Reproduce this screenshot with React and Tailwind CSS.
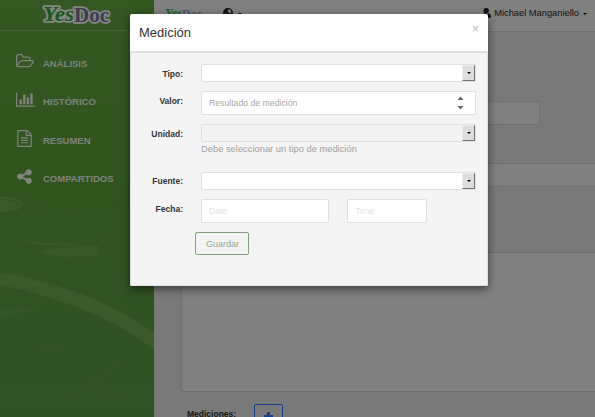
import React from "react";

const FOLDER =
  "M1781 803q0-35-53-35h-1088q-40 0-85.5 21.5t-71.5 52.5l-294 363q-18 24-18 40 0 35 53 35h1088q40 0 86-22t71-53l294-363q18-22 18-39zm-1141-163h768v-160q0-40-28-68t-68-28h-576q-40 0-68-28t-28-68v-64q0-40-28-68t-68-28h-320q-40 0-68 28t-28 68v853l256-315q44-53 116-87.5t140-34.5zm1269 163q0 62-46 120l-295 363q-43 53-116 87.5t-140 34.5h-1088q-92 0-158-66t-66-158v-960q0-92 66-158t158-66h320q92 0 158 66t66 158v32h544q92 0 158 66t66 158v160h192q54 0 99 24.5t67 70.5q15 32 15 68z";
const CHART =
  "M640 896v512h-256v-512h256zm384-512v1024h-256v-1024h256zm1024 1152v128h-2048v-1536h128v1408h1920zm-640-896v768h-256v-768h256zm384-384v1152h-256v-1152h256z";
const FILE =
  "M1596 380q28 28 48 76t20 88v1152q0 40-28 68t-68 28h-1344q-40 0-68-28t-28-68v-1600q0-40 28-68t68-28h896q40 0 88 20t76 48zm-444-244v376h376q-10-29-22-41l-313-313q-12-12-41-22zm384 1528v-1024h-416q-40 0-68-28t-28-68v-416h-768v1536h1280zm-1024-864q0-14 9-23t23-9h704q14 0 23 9t9 23v64q0 14-9 23t-23 9h-704q-14 0-23-9t-9-23v-64zm736 224q14 0 23 9t9 23v64q0 14-9 23t-23 9h-704q-14 0-23-9t-9-23v-64q0-14 9-23t23-9h704zm0 256q14 0 23 9t9 23v64q0 14-9 23t-23 9h-704q-14 0-23-9t-9-23v-64q0-14 9-23t23-9h704z";
const SHARE =
  "M1344 1024q133 0 226.5 93.5t93.5 226.5-93.5 226.5-226.5 93.5-226.5-93.5-93.5-226.5q0-12 2-34l-360-180q-92 86-218 86-133 0-226.5-93.5t-93.5-226.5 93.5-226.5 226.5-93.5q126 0 218 86l360-180q-2-22-2-34 0-133 93.5-226.5t226.5-93.5 226.5 93.5 93.5 226.5-93.5 226.5-226.5 93.5q-126 0-218-86l-360 180q2 22 2 34t-2 34l360 180q92-86 218-86z";

const NAV = [
  { label: "ANÁLISIS", d: FOLDER, box: "0 0 1920 1792", size: "w-[18px] h-[17px]", row: "h-[38px]", pad: "pt-[2px]" },
  { label: "HISTÓRICO", d: CHART, box: "0 0 2048 1792", size: "w-[19px] h-[17px]", row: "h-[38px]", pad: "" },
  { label: "RESUMEN", d: FILE, box: "0 0 1792 1792", size: "w-[17px] h-[17px]", row: "h-[40px]", pad: "" },
  { label: "COMPARTIDOS", d: SHARE, box: "0 0 1792 1792", size: "w-[17px] h-[17px]", row: "h-[37px]", pad: "" },
];

function Logo() {
  return (
    <svg
      className="w-[72px] h-[28px]"
      viewBox="0 0 72 28"
      fontFamily="'Liberation Serif','Times New Roman',serif"
      fontWeight="bold"
      strokeLinejoin="round"
      stroke="#858585"
      strokeWidth="3.6"
      paintOrder="stroke"
    >
      <text x="1" y="18.5" fontSize="21" fontStyle="italic" textLength="31" lengthAdjust="spacingAndGlyphs" fill="#17581b">Yes</text>
      <text x="32" y="20" fontSize="21" textLength="35" lengthAdjust="spacingAndGlyphs" fill="#3c3c52">Doc</text>
    </svg>
  );
}

function Brush() {
  return (
    <svg className="absolute inset-0 w-[154px] h-[417px]" viewBox="0 0 154 417" fill="none">
      <path d="M0 272C45 281 105 296 154 333V349C112 317 55 296 0 285Z" fill="#3a5a29" />
      <path d="M0 276C50 286 105 304 154 339" stroke="#40602f" strokeWidth="1" opacity=".6" />
      <path d="M50 292C90 304 125 322 152 348" stroke="#3c5c2b" strokeWidth="1" />
      <path d="M20 241L55 243 75 244 74 246 40 245Z" fill="#395a28" />
      <path d="M75 246L98 245V256L67 257 38 254Q42 250 50 249Z" fill="#385927" />
      <path d="M0 197C15 197 24 200 23 205C21 210 8 212 0 212Z" fill="#3a5b28" />
      <path d="M0 200C12 199 21 202 18 207" stroke="#335421" />
      <path d="M0 312Q14 307 26 307L35 310Q15 314 0 317Z" fill="#355626" />
      <path d="M25 197Q42 203 33 209M30 215Q80 208 130 212M30 270H75M98 240L106 238" stroke="#375724" strokeWidth="1" opacity=".5" />
      <path d="M72 395Q100 380 115 364M45 345Q52 349 60 344M100 390Q116 397 124 393" stroke="#375626" strokeWidth="1" opacity=".5" />
    </svg>
  );
}

function Sidebar() {
  return (
    <aside className="relative w-[154px] h-full shrink-0 bg-gradient-to-b from-[#355721] via-[#31541f] to-[#315225]">
      <Brush />
      <div className="relative flex h-[31px] border-b border-[#48653a] pl-[42px] pt-[2px]">
        <Logo />
      </div>
      <nav className="relative pt-[11px] pl-4">
        {NAV.map((n) => (
          <a key={n.label} className={`flex items-center ${n.row}`}>
            <span className={`w-[27px] shrink-0 ${n.pad}`}>
              <svg viewBox={n.box} className={`${n.size} fill-[#7f837c]`}>
                <path d={n.d} />
              </svg>
            </span>
            <span className="pt-[5px] text-[9.5px] leading-none font-bold text-[#7f837c]">{n.label}</span>
          </a>
        ))}
      </nav>
    </aside>
  );
}

function Page() {
  return (
    <main className="flex-1 min-w-0 h-full overflow-hidden bg-[#797979]">
      <header className="flex h-8 items-start border-b border-[#707070] bg-[#808080] pl-[11px] pr-[8px] pt-[7px]">
        <svg className="w-[38px] h-[14px]" viewBox="0 0 38 14" fontFamily="'Liberation Serif','Times New Roman',serif" fontWeight="bold">
          <text x="0" y="10" fontSize="12" fontStyle="italic" textLength="17" lengthAdjust="spacingAndGlyphs" fill="#14602c">Yes</text>
          <text x="17" y="11" fontSize="12" textLength="20" lengthAdjust="spacingAndGlyphs" fill="#51516a">Doc</text>
        </svg>
        <svg className="ml-5 mt-px w-[10px] h-[10px]" viewBox="0 0 10 10">
          <circle cx="5" cy="5" r="4.9" fill="#111" />
          <path d="M5.6 1L8 2.2 8.3 4.4 6.8 5.4 5.4 4 4.4 3.4ZM2 5L4 6 3.4 8Z" fill="#808080" />
        </svg>
        <span className="ml-[5px] mt-[6px] border-x-2 border-t-2 border-x-transparent border-t-black" />
        <div className="ml-auto flex items-center pt-px text-[9.3px] leading-[10px] text-[#111]">
          <svg className="mr-[3px] w-[9px] h-[10px]" viewBox="0 0 9 10" fill="#111">
            <circle cx="4.2" cy="2.8" r="2.7" />
            <path d="M0 8.5Q0 5.5 3 5.2Q5 6.5 7 5.2Q9 6 9 9.8H1Q0 9.8 0 8.5Z" />
          </svg>
          Michael Manganiello
          <span className="ml-1 mt-[2px] border-x-2 border-t-2 border-x-transparent border-t-black" />
        </div>
      </header>
      <div className="pl-[27px] pt-[69px]">
        <div className="h-6 w-[359px] rounded-[2px] border border-[#707070] bg-[#808080]" />
        <div className="mt-[38px] h-6 w-[440px] rounded-[2px] border border-[#707070] bg-[#808080]" />
        <div className="mt-[65px] h-[140px] w-[440px] rounded-[2px] border border-[#6e6e6e] bg-[#808080]" />
        <div className="mt-3 flex pl-[6px]">
          <span className="w-[67px] pt-[5px] text-[8.5px] leading-[10px] font-bold text-[#171717]">Mediciones:</span>
          <span className="flex h-6 w-[29px] justify-center rounded-[2px] border border-[#173f8c] pt-[7px]">
            <svg className="w-[9px] h-[9px]" viewBox="0 0 9 9" fill="#173f8c">
              <path d="M3 0H6V3H9V6H6V9H3V6H0V3H3Z" />
            </svg>
          </span>
        </div>
      </div>
    </main>
  );
}

function Select({ disabled }) {
  return (
    <div className={`flex h-[18px] w-[275px] justify-end rounded-[2px] border border-[#e0e0e0] ${disabled ? "bg-[#f3f3f3]" : "bg-white"}`}>
      <span className="flex h-4 w-[13px] items-center justify-center border-t border-l border-r border-b border-t-[#eee] border-l-[#eee] border-r-[#737373] border-b-[#737373] bg-[#dcdcdc]">
        <span className="border-x-2 border-t-2 border-x-transparent border-t-black" />
      </span>
    </div>
  );
}

function Row({ label, className, labelPad, children }) {
  return (
    <div className={`flex items-start ${className}`}>
      <label className={`w-[52px] shrink-0 text-right text-[8.5px] leading-[10px] font-bold text-[#333] ${labelPad}`}>{label}</label>
      <div className="ml-[18px] flex">{children}</div>
    </div>
  );
}

function Modal() {
  return (
    <section className="absolute left-[130px] top-[14px] flex h-[272px] w-[358px] flex-col rounded-[2px] bg-white shadow-[0_3px_10px_rgba(0,0,0,0.5)]">
      <header className="flex h-[37px] shrink-0 items-start justify-between pl-[9px] pr-[9px]">
        <h4 className="pt-[11px] text-[13px] leading-[15px] text-[#333]">Medición</h4>
        <button className="pt-[10px] text-[12px] leading-[10px] text-[#bbb]">×</button>
      </header>
      <div className="flex-1 rounded-[2px] border border-t-2 border-[#e0e0e0] bg-[#f4f4f4] pt-[11px]">
        <Row label="Tipo:" className="h-[27px]" labelPad="pt-[5px]"><Select /></Row>
        <Row label="Valor:" className="h-[33px]" labelPad="pt-[5px]">
          <div className="flex h-6 w-[275px] items-center justify-between rounded-[2px] border border-[#e0e0e0] bg-white pl-[7px] pr-[11px]">
            <span className="text-[8.7px] leading-[10px] text-[#aaa]">Resultado de medición</span>
            <svg className="w-[7px] h-[14px]" viewBox="0 0 7 14" fill="#666">
              <path d="M.5 4L3.5 .5 6.5 4ZM.5 10L3.5 13.5 6.5 10Z" />
            </svg>
          </div>
        </Row>
        <Row label="Unidad:" className="h-[18px]" labelPad="pt-[5px]"><Select disabled /></Row>
        <p className="h-[30px] pl-[70px] pt-[2px] text-[9.35px] leading-[10px] text-[#a0a0a0]">Debe seleccionar un tipo de medición</p>
        <Row label="Fuente:" className="h-[27px]" labelPad="pt-[4px]"><Select /></Row>
        <Row label="Fecha:" className="h-[33px]" labelPad="pt-[5px]">
          <div className="flex h-6 w-[128px] items-center rounded-[2px] border border-[#e0e0e0] bg-white pl-[7px] text-[8.7px] leading-[10px] text-[#e2e2e2]">Date</div>
          <div className="ml-[18px] flex h-6 w-[80px] items-center rounded-[2px] border border-[#e0e0e0] bg-white pl-[7px] text-[8.7px] leading-[10px] text-[#e2e2e2]">Time</div>
        </Row>
        <button className="ml-16 flex h-[23px] w-[54px] items-center justify-center rounded-[2px] border border-[#84a07e] pl-px text-[9px] leading-[10px] text-[#93a58f]">Guardar</button>
      </div>
    </section>
  );
}

export default function App() {
  return (
    <div className="relative flex h-[417px] w-[595px] overflow-hidden font-['Liberation_Sans',Arial,sans-serif]">
      <Sidebar />
      <Page />
      <Modal />
    </div>
  );
}
